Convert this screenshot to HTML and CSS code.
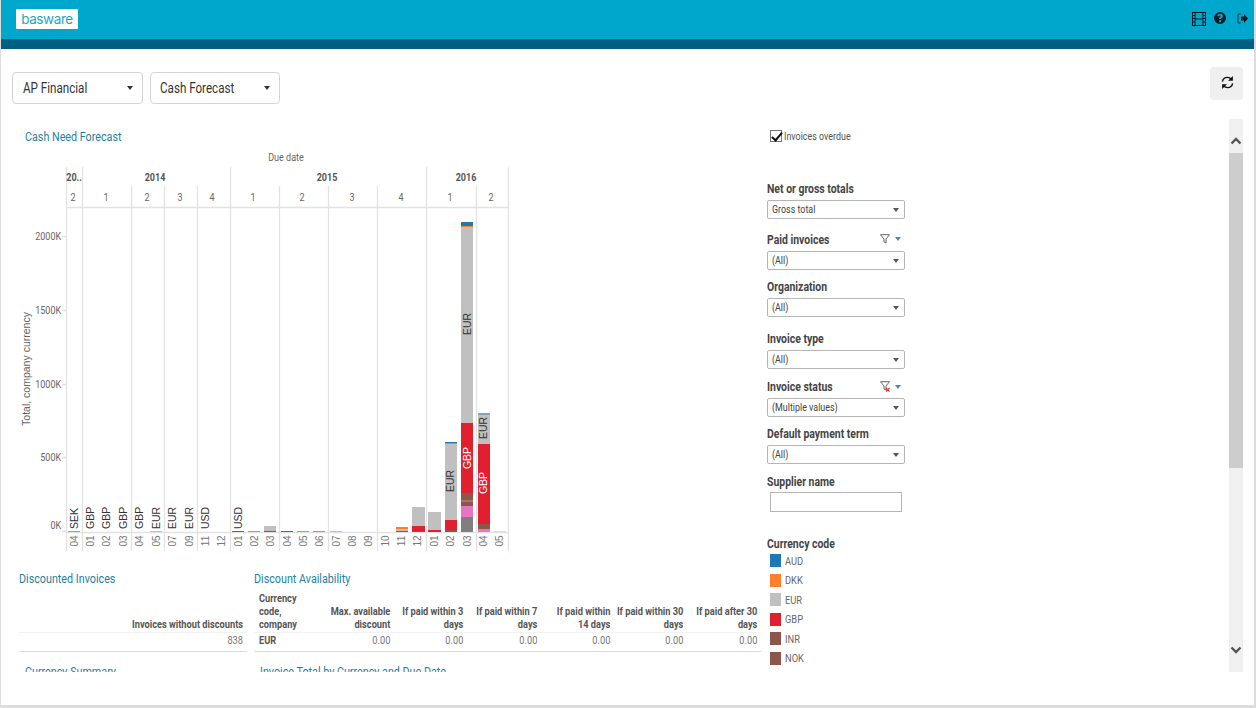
FILE: index.html
```html
<!DOCTYPE html>
<html lang="en">
<head>
<meta charset="utf-8">
<title>Cash Forecast</title>
<link rel="stylesheet" href="styles.css">
</head>
<body>
<div class="app">
  <header class="topbar">
    <div class="logo">basware</div>
    <div class="top-icons">
      <svg width="14" height="14" viewBox="0 0 14 14"><path fill="#0b1a22" fill-rule="evenodd" d="M0 0h14v14H0zM1 1v2h1.600V1zM1 4v2h1.600V4zM1 7v2.500h1.600V7zM1 10.500V13h1.600v-2.500zM11.400 1v2H13V1zM11.400 4v2H13V4zM11.400 7v2.500H13V7zM11.400 10.500V13H13v-2.500zM3.600 1v5.400h6.800V1zM3.600 7.600V13h6.800V7.600z"/></svg>
      <svg width="12" height="12" viewBox="0 0 12 12"><path fill="#0b1a22" fill-rule="evenodd" d="M6 0a6 6 0 1 1 0 12A6 6 0 0 1 6 0zM5 8.300v1.900h2V8.300zM6 1.800c-1.500 0-2.500.8-2.700 2.200l1.700.4c.1-.6.400-1 1-1 .5 0 .8.300.8.700 0 .5-.4.700-.8 1-.6.400-1 .9-1 1.900h2c0-.5.200-.7.700-1 .7-.5 1.200-1 1.200-2 0-1.400-1.100-2.200-2.900-2.200z"/></svg>
      <svg class="ico-exit" width="11" height="11" viewBox="0 0 11 11"><path fill="#0b1a22" d="M4 3.500h3V1l4 4.500-4 4.500V7.500H4z"/><path fill="none" stroke="#0b4a5c" stroke-width="1.300" d="M3.500 1H2a1 1 0 0 0-1 1v7a1 1 0 0 0 1 1h1.500"/></svg>
    </div>
  </header>

  <div class="toolbar">
    <div class="nav-selects">
      <div class="nav-select"><span class="sq">AP Financial</span><i class="caret"></i></div>
      <div class="nav-select nav-select-b"><span class="sq">Cash Forecast</span><i class="caret"></i></div>
    </div>
    <button class="refresh" type="button" aria-label="Refresh">
      <svg width="13" height="15" viewBox="0 0 14 16"><g fill="none" stroke="#111" stroke-width="1.500"><path d="M1.500 7C2 4.200 4.200 2.500 7 2.500c1.900 0 3.200.8 4.200 2"/><path d="M12.500 9c-.5 2.800-2.700 4.500-5.500 4.500-1.900 0-3.200-.8-4.200-2"/></g><path fill="#111" d="M12.800 1v5.200H7.600zM1.200 15V9.800h5.200z"/></svg>
    </button>
  </div>

  <div class="workspace">
    <main class="report">
      <h2 class="viz-title viz-title-main">Cash Need Forecast</h2>
      <svg class="chart" width="761" height="415" viewBox="1 145 761 415">
        <text class="c-head" x="286" y="161" text-anchor="middle">Due date</text>

        <g class="grid">
          <path d="M66.500 167V551M82.500 186V551M131.500 186V551M164.500 186V551M197.500 186V551M279.500 186V551M328.500 186V551M377.500 186V551M476.500 186V551"/>
          <path d="M82.500 167V186M230.500 167V551M426.500 167V551M508.500 167V551"/>
          <path d="M66 207.500H509M66 532.500H509"/>
          <path d="M62 236.500H66M62 310.500H66M62 384.500H66M62 457.500H66M62 531.500H66"/>
        </g>

        <g class="c-year" text-anchor="middle">
          <text x="74" y="181">20..</text>
          <text x="155" y="181">2014</text>
          <text x="327" y="181">2015</text>
          <text x="466" y="181">2016</text>
        </g>
        <g class="c-quarter" text-anchor="middle">
          <text x="73" y="201">2</text><text x="106" y="201">1</text><text x="147" y="201">2</text>
          <text x="180" y="201">3</text><text x="212" y="201">4</text><text x="253" y="201">1</text>
          <text x="302" y="201">2</text><text x="352" y="201">3</text><text x="401" y="201">4</text>
          <text x="450" y="201">1</text><text x="491" y="201">2</text>
        </g>

        <g class="c-axis" text-anchor="end">
          <text x="61" y="240">2000K</text>
          <text x="61" y="314">1500K</text>
          <text x="61" y="388">1000K</text>
          <text x="61" y="461">500K</text>
          <text x="61" y="529">0K</text>
        </g>
        <text class="c-axis-title" text-anchor="middle" transform="translate(30 369) rotate(-90)">Total, company currency</text>

        <g class="bars">
          <rect class="s-pink" x="68" y="531" width="12" height="1"/>
          <rect class="s-grey" x="150" y="531" width="12" height="1"/>
          <rect class="s-brown" x="232" y="531" width="12" height="1"/>
          <rect class="s-pink" x="248" y="531" width="12" height="1"/>
          <rect class="s-grey" x="264" y="526" width="12" height="5"/>
          <rect class="s-brown" x="264" y="531" width="12" height="1"/>
          <rect class="s-brown" x="281" y="531" width="12" height="1"/>
          <rect class="s-pink" x="297" y="531" width="12" height="1"/>
          <rect class="s-orange" x="313" y="531" width="12" height="1"/>
          <rect class="s-grey" x="330" y="531" width="12" height="1"/>

          <rect class="s-orange" x="396" y="527" width="12" height="2"/>
          <rect class="s-grey" x="396" y="529" width="12" height="2"/>
          <rect class="s-brown" x="396" y="531" width="12" height="1"/>

          <rect class="s-grey" x="412" y="507" width="13" height="19"/>
          <rect class="s-red" x="412" y="526" width="13" height="5"/>
          <rect class="s-brown" x="412" y="531" width="13" height="1"/>

          <rect class="s-grey" x="428" y="512" width="13" height="18"/>
          <rect class="s-red" x="428" y="530" width="13" height="2"/>

          <rect class="s-blue" x="445" y="442" width="12" height="1"/>
          <rect class="s-orange" x="445" y="443" width="12" height="1"/>
          <rect class="s-grey" x="445" y="444" width="12" height="76"/>
          <rect class="s-red" x="445" y="520" width="12" height="10"/>
          <rect class="s-brown" x="445" y="530" width="12" height="2"/>

          <rect class="s-blue" x="461" y="222" width="12" height="4"/>
          <rect class="s-orange" x="461" y="226" width="12" height="1"/>
          <rect class="s-grey" x="461" y="227" width="12" height="196"/>
          <rect class="s-red" x="461" y="423" width="12" height="70"/>
          <rect class="s-brown" x="461" y="493" width="12" height="7"/>
          <rect class="s-brown2" x="461" y="500" width="12" height="2"/>
          <rect class="s-brown" x="461" y="502" width="12" height="4"/>
          <rect class="s-pink" x="461" y="506" width="12" height="11"/>
          <rect class="s-dark" x="461" y="517" width="12" height="15"/>

          <rect class="s-steel" x="478" y="413" width="12" height="2"/>
          <rect class="s-grey" x="478" y="415" width="12" height="29"/>
          <rect class="s-red" x="478" y="444" width="12" height="80"/>
          <rect class="s-brown" x="478" y="524" width="12" height="5"/>
          <rect class="s-pink" x="478" y="529" width="12" height="3"/>

          <rect class="s-light" x="494" y="531" width="12" height="1"/>
        </g>

        <g class="c-mark">
          <text transform="translate(78 529) rotate(-90)">SEK</text>
          <text transform="translate(94 529) rotate(-90)">GBP</text>
          <text transform="translate(110 529) rotate(-90)">GBP</text>
          <text transform="translate(127 529) rotate(-90)">GBP</text>
          <text transform="translate(143 529) rotate(-90)">GBP</text>
          <text transform="translate(160 529) rotate(-90)">EUR</text>
          <text transform="translate(176 529) rotate(-90)">EUR</text>
          <text transform="translate(193 529) rotate(-90)">EUR</text>
          <text transform="translate(209 529) rotate(-90)">USD</text>
          <text transform="translate(242 529) rotate(-90)">USD</text>
          <text text-anchor="middle" transform="translate(454 481) rotate(-90)">EUR</text>
          <text text-anchor="middle" transform="translate(471 324) rotate(-90)">EUR</text>
          <text text-anchor="middle" transform="translate(487 428) rotate(-90)">EUR</text>
          <text class="c-mark-light" text-anchor="middle" transform="translate(471 458) rotate(-90)">GBP</text>
          <text class="c-mark-light" text-anchor="middle" transform="translate(487 483) rotate(-90)">GBP</text>
        </g>

        <g class="c-month" text-anchor="middle">
          <text transform="translate(78 541) rotate(-90)">04</text>
          <text transform="translate(94 541) rotate(-90)">01</text>
          <text transform="translate(110 541) rotate(-90)">02</text>
          <text transform="translate(127 541) rotate(-90)">03</text>
          <text transform="translate(143 541) rotate(-90)">04</text>
          <text transform="translate(160 541) rotate(-90)">05</text>
          <text transform="translate(176 541) rotate(-90)">07</text>
          <text transform="translate(193 541) rotate(-90)">09</text>
          <text transform="translate(209 541) rotate(-90)">11</text>
          <text transform="translate(225 541) rotate(-90)">12</text>
          <text transform="translate(242 541) rotate(-90)">01</text>
          <text transform="translate(258 541) rotate(-90)">02</text>
          <text transform="translate(274 541) rotate(-90)">03</text>
          <text transform="translate(291 541) rotate(-90)">04</text>
          <text transform="translate(307 541) rotate(-90)">05</text>
          <text transform="translate(323 541) rotate(-90)">06</text>
          <text transform="translate(340 541) rotate(-90)">07</text>
          <text transform="translate(356 541) rotate(-90)">08</text>
          <text transform="translate(372 541) rotate(-90)">09</text>
          <text transform="translate(389 541) rotate(-90)">10</text>
          <text transform="translate(405 541) rotate(-90)">11</text>
          <text transform="translate(421 541) rotate(-90)">12</text>
          <text transform="translate(438 541) rotate(-90)">01</text>
          <text transform="translate(454 541) rotate(-90)">02</text>
          <text transform="translate(471 541) rotate(-90)">03</text>
          <text transform="translate(487 541) rotate(-90)">04</text>
          <text transform="translate(503 541) rotate(-90)">05</text>
        </g>
      </svg>

      <div class="tables">
        <section class="tbl-one">
          <h2 class="viz-title">Discounted Invoices</h2>
          <table class="data">
            <thead><tr><th class="num"><span>Invoices without discounts</span></th></tr></thead>
            <tbody><tr><td class="num"><span>838</span></td></tr></tbody>
          </table>
          <h2 class="viz-title viz-title-next">Currency Summary</h2>
        </section>
        <section class="tbl-two">
          <h2 class="viz-title">Discount Availability</h2>
          <table class="data">
            <thead>
              <tr>
                <th class="txt"><span>Currency<br>code,<br>company</span></th>
                <th class="num"><span>Max. available<br>discount</span></th>
                <th class="num"><span>If paid within 3<br>days</span></th>
                <th class="num"><span>If paid within 7<br>days</span></th>
                <th class="num"><span>If paid within<br>14 days</span></th>
                <th class="num"><span>If paid within 30<br>days</span></th>
                <th class="num"><span>If paid after 30<br>days</span></th>
              </tr>
            </thead>
            <tbody>
              <tr>
                <td class="txt"><span>EUR</span></td>
                <td class="num"><span>0.00</span></td><td class="num"><span>0.00</span></td><td class="num"><span>0.00</span></td>
                <td class="num"><span>0.00</span></td><td class="num"><span>0.00</span></td><td class="num"><span>0.00</span></td>
              </tr>
            </tbody>
          </table>
          <h2 class="viz-title viz-title-next">Invoice Total by Currency and Due Date</h2>
        </section>
      </div>
    </main>

    <aside class="filters">
      <label class="check"><input type="checkbox" checked><span class="sq sq-tight">Invoices overdue</span></label>

      <div class="f-label f-first"><span class="sq">Net or gross totals</span></div>
      <div class="combo"><span class="sq sq-tight">Gross total</span><i class="caret caret-sm"></i></div>

      <div class="f-label f-m14"><span class="sq">Paid invoices</span>
        <span class="f-tools">
          <svg width="10" height="10" viewBox="0 0 10 10"><path fill="none" stroke="#666" d="M.5.700h9L6 5v4L4 8V5z"/></svg>
          <i class="caret-blue"></i>
        </span>
      </div>
      <div class="combo"><span class="sq sq-tight">(All)</span><i class="caret caret-sm"></i></div>

      <div class="f-label f-m10"><span class="sq">Organization</span></div>
      <div class="combo"><span class="sq sq-tight">(All)</span><i class="caret caret-sm"></i></div>

      <div class="f-label f-m15"><span class="sq">Invoice type</span></div>
      <div class="combo"><span class="sq sq-tight">(All)</span><i class="caret caret-sm"></i></div>

      <div class="f-label f-m11"><span class="sq">Invoice status</span>
        <span class="f-tools">
          <svg width="10" height="11" viewBox="0 0 10 11"><path fill="none" stroke="#666" d="M.5.700h9L6 5v4L4 8V5z"/><path stroke="#d33" stroke-width="1.200" d="M6 7l3.500 3.500M9.500 7L6 10.500"/></svg>
          <i class="caret-blue"></i>
        </span>
      </div>
      <div class="combo"><span class="sq sq-tight">(Multiple values)</span><i class="caret caret-sm"></i></div>

      <div class="f-label f-m10"><span class="sq">Default payment term</span></div>
      <div class="combo"><span class="sq sq-tight">(All)</span><i class="caret caret-sm"></i></div>

      <div class="f-label f-m11"><span class="sq">Supplier name</span></div>
      <input class="text-field" type="text" aria-label="Supplier name">

      <div class="f-label f-m25"><span class="sq">Currency code</span></div>
      <ul class="legend">
        <li><i class="s-blue"></i><span class="sq sq-tight">AUD</span></li>
        <li><i class="s-orange"></i><span class="sq sq-tight">DKK</span></li>
        <li><i class="s-grey"></i><span class="sq sq-tight">EUR</span></li>
        <li><i class="s-red"></i><span class="sq sq-tight">GBP</span></li>
        <li><i class="s-brown"></i><span class="sq sq-tight">INR</span></li>
        <li><i class="s-brown"></i><span class="sq sq-tight">NOK</span></li>
      </ul>
    </aside>

    <div class="scrollbar">
      <svg width="14" height="10" viewBox="0 0 14 10"><path fill="none" stroke="#555" stroke-width="2.400" d="M2.500 7.500 7 3l4.500 4.500"/></svg>
      <div class="scroll-thumb"></div>
      <svg width="14" height="10" viewBox="0 0 14 10"><path fill="none" stroke="#555" stroke-width="2.400" d="M2.500 2.500 7 7l4.500-4.500"/></svg>
    </div>
  </div>
</div>
</body>
</html>
```
FILE: styles.css
```css
* { box-sizing: border-box; }

html, body { margin: 0; height: 100%; }

body {
  font-family: Roboto, sans-serif;
  background: #fff;
  overflow: hidden;
}

/* The source UI renders its text horizontally condensed */
.sq {
  display: inline-block;
  transform: scaleX(.86);
  transform-origin: left center;
  white-space: nowrap;
}
.sq-tight { transform: scaleX(.81); }

.app {
  width: 1256px;
  height: 708px;
  display: flex;
  flex-direction: column;
  background: #fff;
  border-left: 1px solid #dcdcdc;
  border-right: 2px solid #dcdcdc;
  border-bottom: 3px solid #dcdcdc;
  overflow: hidden;
}

.topbar {
  flex: none;
  height: 49px;
  background: #00a7cc;
  border-bottom: 10px solid #005f83;
  display: flex;
  align-items: flex-start;
  justify-content: space-between;
  padding: 9px 6px 0 15px;
}

.logo {
  width: 62px;
  height: 20px;
  background: #fff;
  border-radius: 1px;
  color: #1ea6c6;
  font-family: Inter, sans-serif;
  font-weight: 400;
  font-size: 13.500px;
  line-height: 20px;
  text-align: center;
  letter-spacing: -0.400px;
}

.top-icons {
  display: flex;
  align-items: flex-start;
  padding-top: 3px;
  gap: 8px;
}
.ico-exit { margin: 1px 0 0 3px; }

.toolbar {
  flex: none;
  height: 70px;
  display: flex;
  justify-content: space-between;
  align-items: flex-start;
  padding: 18px 11px 0 11px;
}

.nav-selects {
  display: flex;
  gap: 7px;
  padding-top: 5px;
}

.nav-select {
  width: 131px;
  height: 32px;
  border: 1px solid #d5d5d5;
  border-radius: 4px;
  background: #fff;
  display: flex;
  align-items: center;
  justify-content: space-between;
  padding: 0 9px 0 10px;
  font-size: 14px;
  color: #333;
}
.nav-select .sq { transform: scaleX(.83); }
.nav-select-b { width: 130px; padding-left: 9px; }

.caret {
  display: block;
  width: 0;
  height: 0;
  border-left: 3.500px solid transparent;
  border-right: 3.500px solid transparent;
  border-top: 4px solid #333;
}
.caret-sm {
  border-left-width: 3px;
  border-right-width: 3px;
  border-top-color: #555;
}

.refresh {
  width: 33px;
  height: 33px;
  border: 0;
  border-radius: 4px;
  background: #efefef;
  padding: 0 0 3px 1px;
  display: flex;
  align-items: center;
  justify-content: center;
}

.workspace {
  flex: none;
  height: 553px;
  display: flex;
  overflow: hidden;
}

.report {
  flex: none;
  width: 766px;
  height: 553px;
  overflow: hidden;
}

.viz-title {
  margin: 0;
  height: 16px;
  font-weight: 400;
  font-size: 12.500px;
  line-height: 18px;
  color: #1f7f9f;
  white-space: nowrap;
  transform: scaleX(.86);
  transform-origin: left center;
}
.viz-title-main {
  margin-left: 24px;
  padding-top: 9px;
  height: 26px;
}
.viz-title-next {
  margin: 11px 0 0 6px;
}

.chart { display: block; }

.grid path { fill: none; stroke: #e2e2e2; stroke-width: 1.300; }

.c-head, .c-year, .c-quarter, .c-axis {
  font-size: 11px;
  fill: #666;
}
.c-year { font-weight: 700; fill: #555; }

.c-head, .c-year text, .c-quarter text, .c-axis text {
  transform-box: fill-box;
  transform-origin: center;
  transform: scaleX(.82);
}
.c-axis text { transform-origin: right center; }

.c-month {
  font-family: "Liberation Sans", sans-serif;
  font-size: 10px;
  fill: #777;
}
.c-axis-title {
  font-family: "Liberation Sans", sans-serif;
  font-size: 10.500px;
  fill: #666;
}
.c-mark {
  font-family: "Liberation Sans", sans-serif;
  font-size: 10.500px;
  fill: #333;
}
.c-mark .c-mark-light { fill: #fff; }

.s-blue { fill: #1f77b4; background: #1f77b4; }
.s-orange { fill: #ff7f2a; background: #ff7f2a; }
.s-grey { fill: #c0c0c0; background: #c0c0c0; }
.s-red { fill: #e0202e; background: #e0202e; }
.s-brown { fill: #8c564b; background: #8c564b; }
.s-brown2 { fill: #a5776e; }
.s-pink { fill: #e775c0; }
.s-dark { fill: #7f7f7f; }
.s-steel { fill: #7fa5bf; }
.s-light { fill: #dddddd; }

.tables {
  display: flex;
  gap: 7px;
  padding-left: 18px;
  margin-top: 10px;
}
.tbl-one { flex: none; width: 228px; }
.tbl-two { flex: none; width: 507px; }

.data {
  width: 100%;
  border-collapse: collapse;
  table-layout: fixed;
  font-size: 11px;
  line-height: 13px;
}
.data th {
  height: 46px;
  padding: 0 4px 1px;
  vertical-align: bottom;
  font-weight: 700;
  color: #555;
  border-bottom: 1px solid #f2f2f2;
  white-space: nowrap;
}
.data td {
  height: 19px;
  padding: 0 4px 2px;
  color: #777;
  border-bottom: 1px solid #dcdcdc;
}
.data span {
  display: block;
  transform: scaleX(.84);
}
.data .num { text-align: right; }
.data .num span {
  margin-left: -60px;
  transform-origin: right center;
}
.data .txt { text-align: left; padding-left: 5px; }
.data .txt span { transform-origin: left center; }
.data td.txt { font-weight: 700; color: #555; }
.tbl-two th:first-child { width: 67px; }

.filters {
  flex: none;
  width: 138px;
  height: 553px;
  overflow: hidden;
}

.check {
  display: flex;
  align-items: center;
  gap: 2px;
  height: 14px;
  margin: 10px 0 0 3px;
  font-size: 11px;
  color: #555;
}
.check input {
  appearance: none;
  position: relative;
  flex: none;
  width: 12px;
  height: 12px;
  margin: 0;
  border: 1px solid #777;
  background: #fff;
}
.check input:checked::after {
  content: "";
  position: absolute;
  left: 3px;
  top: -1px;
  width: 4px;
  height: 9px;
  border-right: 2px solid #111;
  border-bottom: 2px solid #111;
  transform: rotate(40deg);
}

.f-label {
  position: relative;
  font-size: 12px;
  font-weight: 700;
  color: #444;
  line-height: 15px;
  height: 13px;
}
.f-label .sq { transform: scaleX(.87); }
.f-first { margin-top: 39px; }
.f-m10 { margin-top: 10px; }
.f-m11 { margin-top: 11px; }
.f-m14 { margin-top: 14px; }
.f-m15 { margin-top: 15px; }
.f-m25 { margin-top: 25px; }

.f-tools {
  position: absolute;
  right: 4px;
  top: 1px;
  display: flex;
  align-items: center;
  gap: 5px;
}
.caret-blue {
  display: block;
  width: 0;
  height: 0;
  border-left: 3px solid transparent;
  border-right: 3px solid transparent;
  border-top: 4px solid #4a89b5;
}

.combo {
  width: 138px;
  height: 19px;
  margin-top: 5px;
  border: 1px solid #b5b5b5;
  border-radius: 2px;
  background: #fff;
  display: flex;
  align-items: center;
  justify-content: space-between;
  padding: 0 5px 0 4px;
  font-size: 11px;
  color: #444;
}

.text-field {
  display: block;
  width: 132px;
  height: 20px;
  margin: 4px 0 0 3px;
  border: 1px solid #b5b5b5;
  background: #fff;
  padding: 0;
}

.legend {
  list-style: none;
  margin: 1px 0 0;
  padding: 0 0 0 3px;
  font-size: 11.500px;
  color: #666;
}
.legend li {
  display: flex;
  align-items: center;
  gap: 4px;
  height: 19.500px;
}
.legend i {
  display: block;
  width: 11px;
  height: 13px;
}

.scrollbar {
  flex: none;
  width: 14px;
  height: 553px;
  margin-left: 324px;
  background: #f0f0f0;
  display: flex;
  flex-direction: column;
  align-items: center;
  padding-top: 17px;
}
.scroll-thumb {
  width: 14px;
  height: 315px;
  margin-top: 7px;
  background: #cdcdcd;
  flex: none;
}
.scrollbar svg:last-child { margin-top: auto; margin-bottom: 17px; }
```
